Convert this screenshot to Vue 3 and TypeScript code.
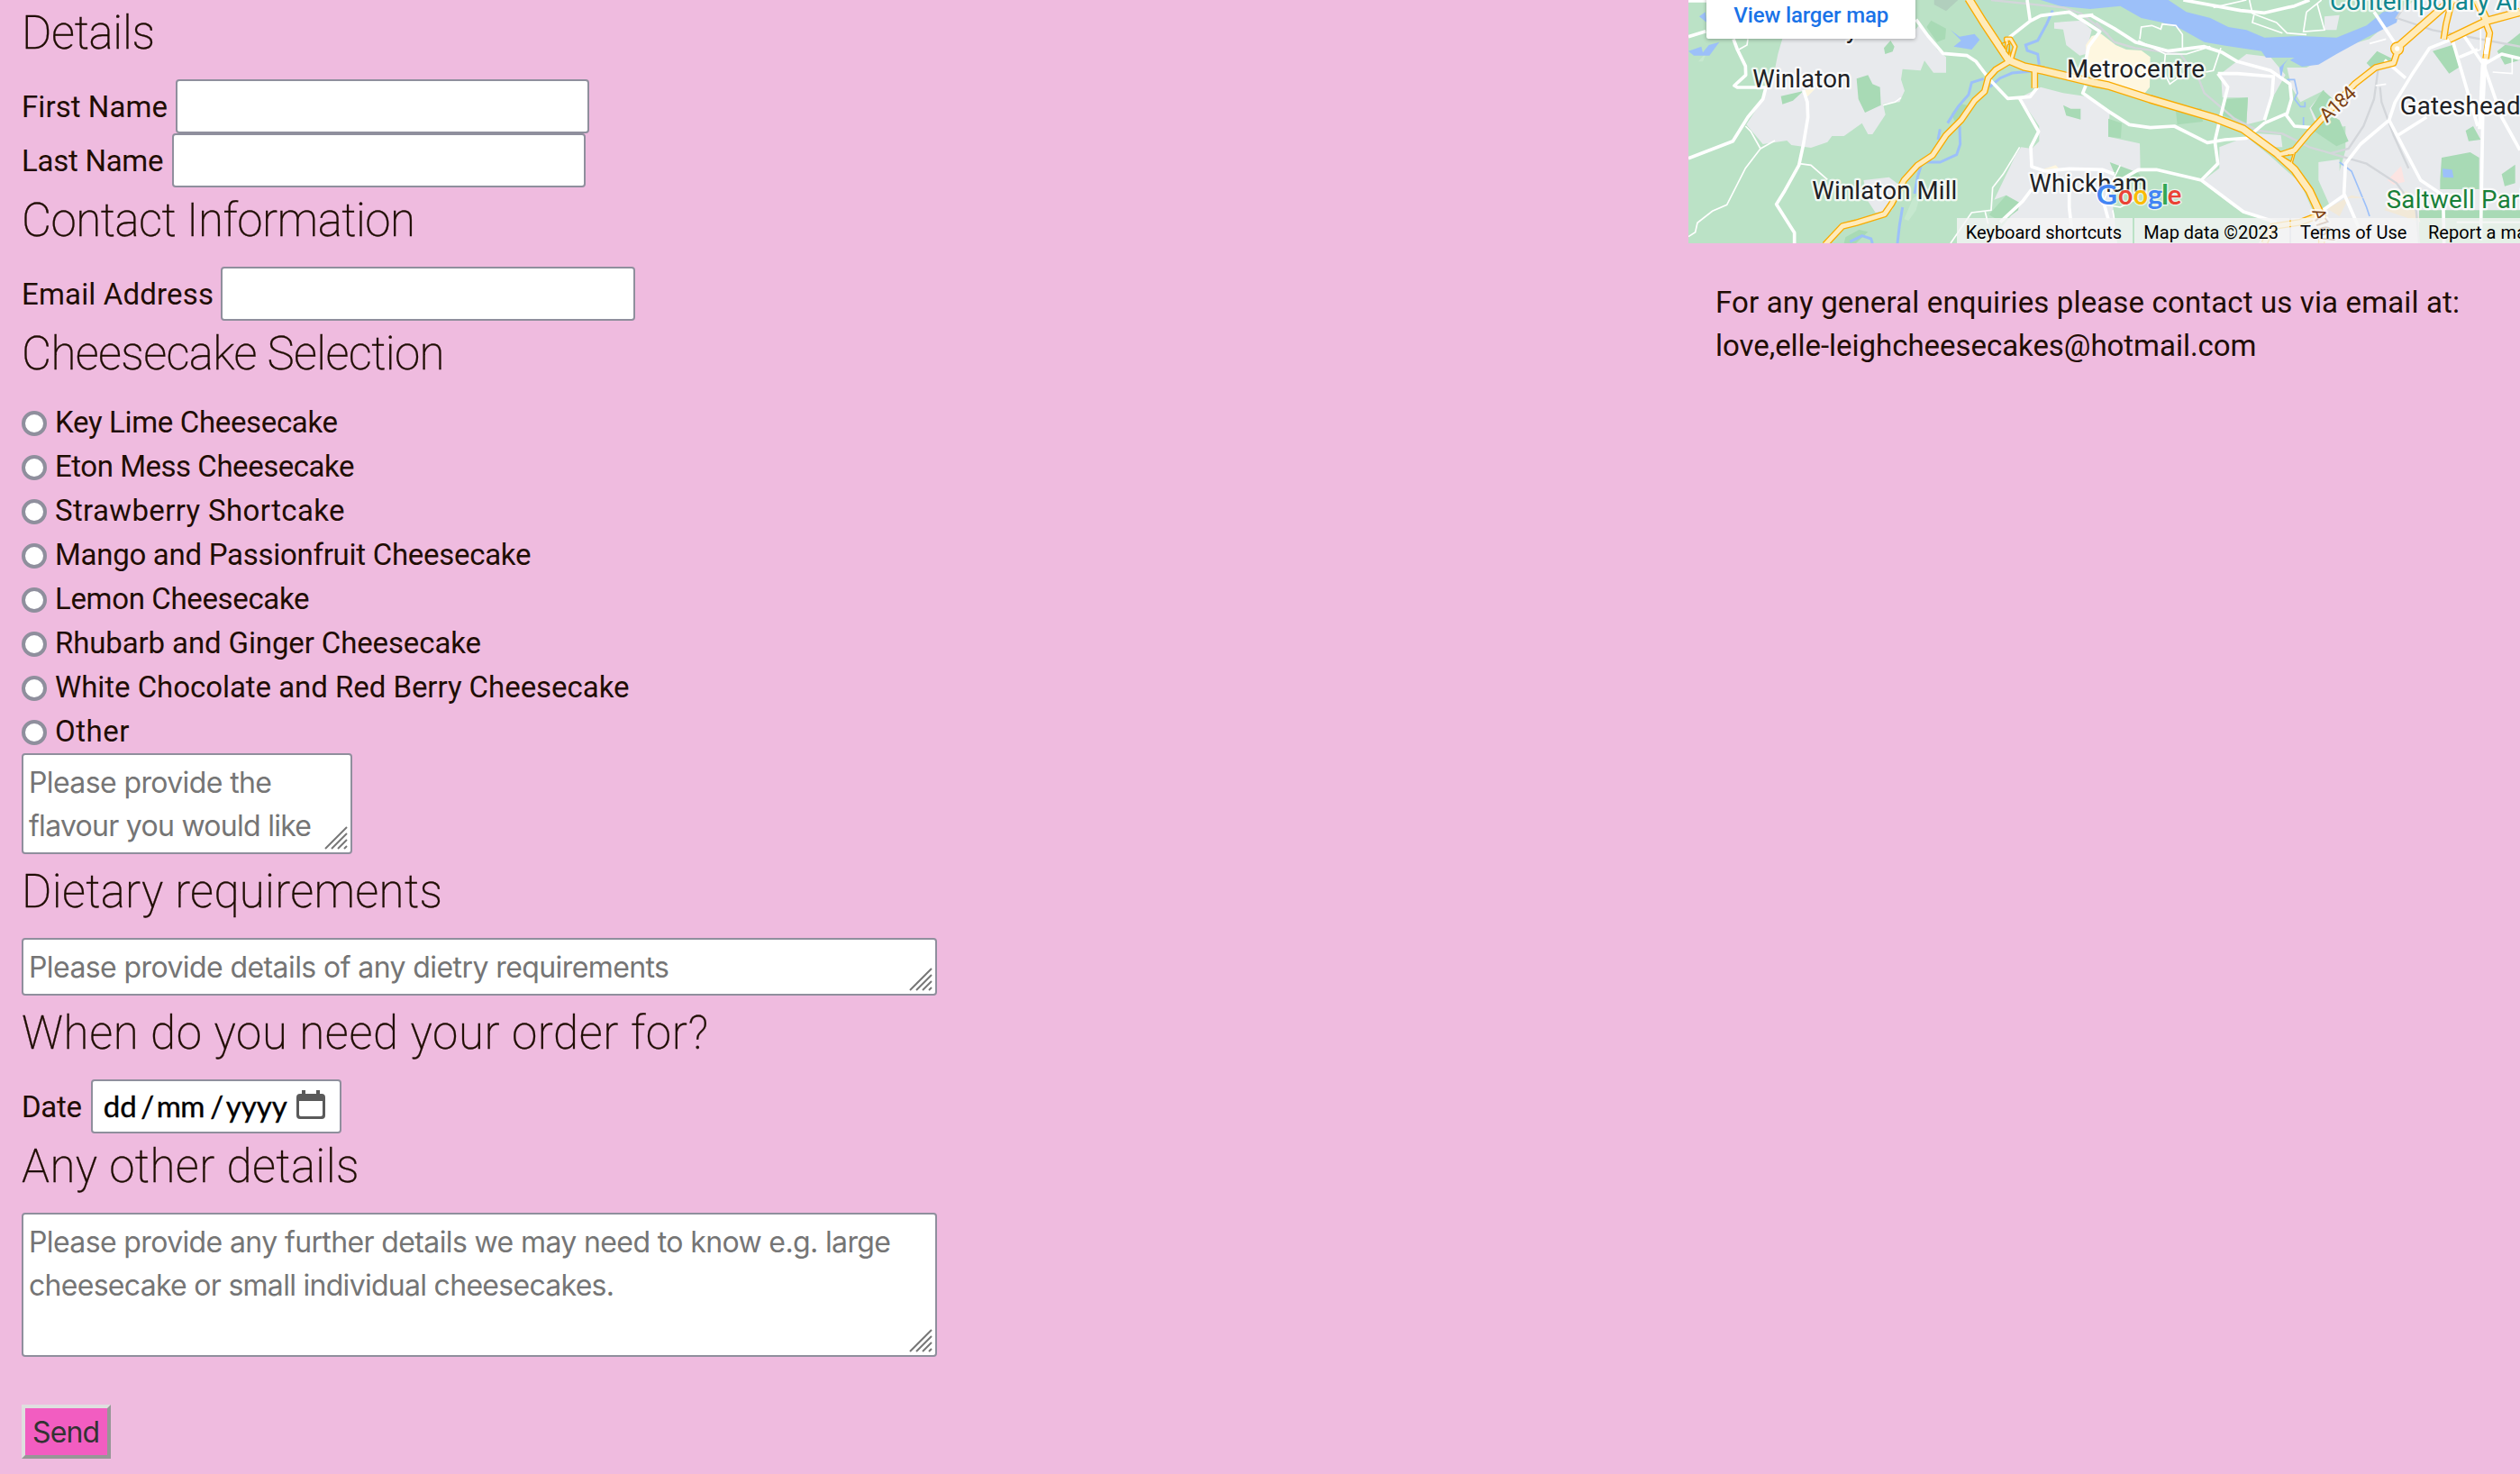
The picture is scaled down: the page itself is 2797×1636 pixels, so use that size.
<script setup lang="ts">
import type { Directive } from 'vue'

// Spreads the letters of a line so that it fills the given width.
const vFit: Directive<HTMLElement, number> = {
  mounted(el, { value }) {
    const count = (el.textContent ?? '').length
    const natural = el.getBoundingClientRect().width
    if (count > 1) el.style.letterSpacing = `${(value - natural) / (count - 1)}px`
  },
}

interface Flavour {
  label: string
  width: number
}

const flavours: Flavour[] = [
  { label: 'Key Lime Cheesecake', width: 314 },
  { label: 'Eton Mess Cheesecake', width: 332.5 },
  { label: 'Strawberry Shortcake', width: 321.5 },
  { label: 'Mango and Passionfruit Cheesecake', width: 528.5 },
  { label: 'Lemon Cheesecake', width: 282.5 },
  { label: 'Rhubarb and Ginger Cheesecake', width: 473 },
  { label: 'White Chocolate and Red Berry Cheesecake', width: 637.5 },
  { label: 'Other', width: 82.5 },
]
</script>

<template>
  <div class="page">
    <form class="order" @submit.prevent>
      <h3><span v-fit="148">Details</span></h3>
      <div class="row"><label><span v-fit="162">First Name</span></label><i class="field first"></i></div>
      <div class="row"><label><span v-fit="157.5">Last Name</span></label><i class="field last"></i></div>
      <h3><span v-fit="437">Contact Information</span></h3>
      <div class="row"><label><span v-fit="213">Email Address</span></label><i class="field email"></i></div>
      <h3><span v-fit="469.5">Cheesecake Selection</span></h3>

      <div v-for="f in flavours" :key="f.label" class="choice">
        <i class="radio"></i><span v-fit="f.width">{{ f.label }}</span>
      </div>

      <div class="area flavour">
        <p><span v-fit="270">Please provide the</span></p>
        <p><span v-fit="314">flavour you would like</span></p>
        <svg class="grip" viewBox="0 0 26 26"><path d="M1 25 25 1M8 25 25 8M15 25l10-10M22 25l3-3" /></svg>
      </div>

      <h3><span v-fit="467">Dietary requirements</span></h3>
      <div class="area diet">
        <p><span v-fit="711">Please provide details of any dietry requirements</span></p>
        <svg class="grip" viewBox="0 0 26 26"><path d="M1 25 25 1M8 25 25 8M15 25l10-10M22 25l3-3" /></svg>
      </div>

      <h3><span v-fit="762">When do you need your order for?</span></h3>
      <div class="row">
        <label><span v-fit="67">Date</span></label>
        <div class="date">
          <span class="day">dd</span><span class="slash">/</span>
          <span class="month">mm</span><span class="slash">/</span>
          <span class="year">yyyy</span>
          <svg class="calendar" viewBox="0 0 32 32">
            <path fill="#5a5a5a" fill-rule="evenodd" d="M6 0h4v4h12V0h4v4h2a4 4 0 0 1 4 4v20a4 4 0 0 1-4 4H4a4 4 0 0 1-4-4V8a4 4 0 0 1 4-4h2zM3 12v15a2 2 0 0 0 2 2h22a2 2 0 0 0 2-2V12z" />
          </svg>
        </div>
      </div>

      <h3><span v-fit="374.5">Any other details</span></h3>
      <div class="area notes">
        <p><span v-fit="957">Please provide any further details we may need to know e.g. large</span></p>
        <p><span v-fit="650">cheesecake or small individual cheesecakes.</span></p>
        <svg class="grip" viewBox="0 0 26 26"><path d="M1 25 25 1M8 25 25 8M15 25l10-10M22 25l3-3" /></svg>
      </div>
      <button class="send" type="submit"><span v-fit="75">Send</span></button>
    </form>

    <aside class="side">
      <svg class="map" viewBox="42 0 2769 810">
        <rect x="42" width="2769" height="810" fill="#bbe2c6" />
        <!-- built-up areas -->
        <g fill="#e8eaed">
          <path d="M355 128H770L810 85 840 120 870 165 900 190V242H858L828 202 815 235 755 230 750 265 762 302 745 340 690 345 698 382 655 447H640L620 410 560 453H520L505 473 450 492 385 483 370 468 290 480 235 415 290 330 330 230 340 180z" />
          <path d="M1145 325 1215 290 1290 310 1360 320 1445 370 1440 455 1545 478 1547 570 1480 600 1450 640 1470 810H1040L1110 726 1145 680 1100 650 1060 665 1130 520 1150 490 1185 495 1210 470V420z" />
          <path d="M1260 75 1350 68 1385 100 1365 180 1345 185 1300 150 1290 98 1260 95zM625 600 710 590 750 620 720 700 665 708 640 670z" />
          <g transform="translate(1380)">
            <path d="M430 490 520 455 600 520 700 610 740 700 800 690 760 600 760 540 830 530 830 570 850 500 850 420 790 430 745 400 730 360 780 300 700 340 670 290 655 225 720 225 860 150 930 130 1000 70 1080 0H1431V810H560L600 740 480 690 370 605 430 560z" />
            <path d="M435 245 520 180 600 190 650 250 610 320 580 400 520 415 525 325 440 325zM780 55 830 50 820 100 780 100zM500 440 635 450 640 490 580 490z" />
          </g>
        </g>
        <!-- parks -->
        <g fill="#a8dab5">
          <path d="M602 262 640 250 655 280 680 290 683 350 630 375 608 330zM350 320 425 303 390 335 355 347zM693 160 715 135 728 155 722 172 697 180zM835 90 850 68 900 95 897 130 870 140zM1290 350 1315 362 1348 362V398L1300 385zM1043 715 1100 650 1145 675 1140 700 1085 740zM917 380 945 345 970 350 960 390 930 405zM565 790 610 765 640 772 600 810H560z" />
          <g transform="translate(1380)">
            <path d="M60 395 105 410 102 460 60 455zM285 370 370 360 375 405 290 415zM455 330 525 325 520 410 430 380zM735 360 775 300 825 345 795 380 830 400 860 470 820 487 735 430 760 410zM920 210 955 170 1005 195 985 225 940 230zM1165 600 1170 525 1265 507 1295 525V630H1165zM1250 435 1275 420 1300 465 1260 470zM1370 580 1415 548V610L1380 620zM1140 170 1205 150 1235 220 1195 245zM1355 170 1431 110V200L1380 215zM1095 700H1431V810H1095zM65 540 160 575 190 620 90 600z" />
          </g>
        </g>
        <path fill="#c6e8cf" d="M760 730 790 660 815 645 800 700 775 735zM75 205 105 170 90 205z" />
        <path fill="#b1cfbd" d="M860 0H940L900 37 860 15z" />
        <!-- water -->
        <g fill="#9cc0f9">
          <path d="M1215 0H1640L1700 40 1780 60 1840 90 1900 100 1960 125 2080 120 2200 125 2300 85 2355 40 2410 35 2400 75 2300 125 2200 180 2140 215 2085 222 2045 200 2060 192 1965 192 1950 170 1830 152 1760 140 1680 95 1620 75 1550 60 1480 20 1380 30 1280 20z" />
          <path d="M915 100 945 122 995 113 1012 133 985 165 925 155 950 135zM78 55 98 40 103 75zM42 170 85 155 90 175 110 150 145 140 112 185 60 185zM2553 562 2585 565 2590 592 2555 590zM2010 225 2040 195 2025 215 2015 265z" />
        </g>
        <g fill="none" stroke="#9cc0f9" stroke-width="9">
          <path d="M1255 35 1235 80 1205 135 1165 150 1170 168 1205 180 1210 215M1180 238 1120 243 1080 260 1045 290M1025 262 985 275 975 315 940 355 905 410M945 420 947 480 935 515 880 540 820 540 805 590 795 645M755 690 745 750 738 810M580 805 620 785 650 795 655 810M880 430 873 465" />
          <path stroke-width="5" d="M2035 265H2060L2070 310 2060 330 2080 355H2095V340M2090 390V420M2210 540 2250 570 2300 690 2310 720" />
        </g>
        <!-- commercial and medical areas -->
        <path fill="#fef7e0" d="M1365 150 1385 120 1415 112 1465 150 1500 165 1550 168 1580 190 1578 290 1560 312 1410 265 1370 240zM425 300 465 295 435 325zM1220 565 1265 550 1275 560z" />
        <path fill="#f2e9d8" d="M2160 690 2210 720 2240 660 2295 660 2250 650 2160 700zM2390 630 2440 640 2480 740 2360 700z" />
        <path fill="#fce4e2" d="M2370 600 2415 553 2427 605 2390 615z" />
        <!-- railways -->
        <g fill="none" stroke="#d3d6da" stroke-width="7">
          <path d="M1050 0 1290 25 1350 45 1440 115M1400 75 1460 140 1530 160 1680 180 1740 260 1760 310 1860 395 1940 435 2020 445 2110 490 2180 510M2340 220 2325 330 2290 420 2240 495 2180 510 2300 545 2400 610 2465 700 2475 810M2345 290 2350 340 2390 450 2440 560M2440 0 2400 60 2520 100 2811 155" />
        </g>
        <!-- minor roads -->
        <g fill="none" stroke="#fff" stroke-width="5">
          <path d="M232 420 250 438 282 495 232 560 170 682 122 703 72 742 65 773 42 788M282 495 330 468M412 545 450 550 505 598M690 350 730 340 750 325M240 130 237 150 210 165M1145 490 1090 580 1055 625 1050 700 985 708 915 810M1030 705 1040 745" />
          <path transform="translate(1380)" d="M165 130 170 90 205 85 235 97 240 80 285 85 307 115V165M160 135 250 180H320L400 155M250 180 245 240 265 280 320 240M530 0 540 45 620 75 655 110 720 115M410 25 520 0M545 50 540 75 640 110M720 40 770 0M755 10 780 100 710 105 720 40M435 160 410 235 385 240M930 145 985 130M950 285 985 280M1225 190 1300 165M1300 0V165M1340 240 1405 245V190M100 550 75 600 40 680 100 690 160 660M80 730 75 700M1220 740H1431" />
        </g>
        <!-- local roads -->
        <g fill="none" stroke="#fff" stroke-width="11" stroke-linejoin="round">
          <path d="M42 3H105M42 122 100 104M192 130 205 165 232 220 233 250 195 285 205 291H300L290 330 240 390 190 470 42 527M425 300 438 340 440 390 425 480 410 550 360 640 335 680 395 775V810M800 65 840 120 890 178 970 185 1000 205 1045 265 1105 328 1180 322 1205 290M1145 328 1208 438 1182 490 1185 555 1230 570 1310 562 1420 565 1460 580M1310 640V690L1318 760M1185 630 1155 670 1080 740M1415 640 1440 730M1110 125 1180 70 1170 0M1180 70 1215 52 1310 40 1350 65 1412 105 1375 155 1365 200M1340 55 1390 50" />
          <path d="M1365 285 1355 310 1440 370 1510 415 1580 425 1660 420 1770 475 1830 465 1900 460 1960 410 2030 380 2060 420 2120 425M1380 50 1460 95 1530 140 1640 170 1760 155 1820 175 1870 205 1980 235 2045 280 2050 330 2035 380M1805 245H1870L1990 255 1985 320 1960 400M1805 245 1838 290 1810 405 1795 470 1805 545 1750 600 1600 565 1540 565 1480 600M1750 600 1830 660 1890 705 2000 740M1690 0 1880 35 1960 43 2060 20 2110 0M2325 40 2405 160M2360 200 2430 260M2585 130 2510 160 2450 250 2395 340 2375 400 2280 480 2230 545 2225 645 2275 760M2155 700 2225 650M2375 400 2480 600 2555 650 2558 810M2405 450 2500 390M2585 130 2670 420M2625 120 2690 215 2750 180 2811 195M2690 215 2680 800M2690 215 2750 390 2811 500M2610 190 2670 165" />
        </g>
        <path d="M2705 130 2690 220 2680 430" fill="none" stroke="#fff" stroke-width="19" />
        <!-- trunk roads -->
        <g fill="none" stroke="#f9ab00" stroke-linejoin="round">
          <path stroke-width="23" d="M497 815 555 753 600 742 695 713 718 680 760 600 805 550 855 517 900 450 950 400 995 335 1028 305 1040 260 1065 232 1110 205M1195 235V293M2000 520 2060 500 2110 440 2260 280 2330 225 2390 210 2405 165M2044 540 2055 500M2557 130 2565 80 2585 0M2697 75 2710 110 2697 195M1980 755 2080 740 2145 715M1985 755 1960 810M2155 710 2150 810" />
          <path stroke-width="29" d="M975-5 1025 75 1108 200 1160 222 1225 235 1390 275 1440 285 1580 330 1800 395 1890 430 2000 510 2060 565 2110 635 2145 710M2400 160 2560 20 2600-10M2575 130 2700 70 2811 40M2665-5 2700 70" />
          <path stroke-width="17" d="M1110 205 1100 130 1115 130 1130 155 1118 195" />
          <circle cx="2402" cy="162" r="14" stroke-width="18" />
        </g>
        <g fill="none" stroke="#ffebba" stroke-linejoin="round">
          <path stroke-width="15" d="M497 815 555 753 600 742 695 713 718 680 760 600 805 550 855 517 900 450 950 400 995 335 1028 305 1040 260 1065 232 1110 205M1195 235V293M2000 520 2060 500 2110 440 2260 280 2330 225 2390 210 2405 165M2044 540 2055 500M2557 130 2565 80 2585 0M2697 75 2710 110 2697 195M1980 755 2080 740 2145 715M1985 755 1960 810M2155 710 2150 810" />
          <path stroke-width="21" d="M975-5 1025 75 1108 200 1160 222 1225 235 1390 275 1440 285 1580 330 1800 395 1890 430 2000 510 2060 565 2110 635 2145 710M2400 160 2560 20 2600-10M2575 130 2700 70 2811 40M2665-5 2700 70" />
          <path stroke-width="9" d="M1110 205 1100 130 1115 130 1130 155 1118 195" />
          <circle cx="2402" cy="162" r="13" stroke-width="12" />
        </g>
        <path d="M1085 145 1098 140 1096 160zM1104 150 1112 145 1108 180 1100 170zM2020 520 2055 515 2048 538z" fill="#bbe2c6" stroke="#f9ab00" stroke-width="4" />
        <circle cx="2402" cy="162" r="8" fill="#fff" />
        <path d="M2705 125 2697 180" stroke="#fff" stroke-width="14" />
        <!-- place names -->
        <g class="place" font-size="83">
          <text x="567" y="127" textLength="40">y</text>
          <text x="256" y="290" textLength="327">Winlaton</text>
          <text x="454" y="662" textLength="483">Winlaton Mill</text>
          <text x="1302" y="258" textLength="459">Metrocentre</text>
          <text x="1177" y="640" textLength="392">Whickham</text>
          <text x="2411" y="380" textLength="402">Gateshead</text>
          <text x="2366" y="692" textLength="486" fill="#188038">Saltwell Park</text>
          <text x="2178" y="33" textLength="665" fill="#0d868f">Contemporary Art</text>
          <text transform="translate(2168 411) rotate(-43)" font-size="66" textLength="140" fill="#7b3f12">A184</text>
          <text transform="translate(2118 702) rotate(72)" font-size="60" textLength="120" fill="#7b3f12">A167</text>
        </g>
        <g class="google" font-size="93">
          <text x="1400" y="680" fill="#4285f4" textLength="70" lengthAdjust="spacingAndGlyphs">G</text>
          <text x="1473" y="680" fill="#ea4335" textLength="49" lengthAdjust="spacingAndGlyphs">o</text>
          <text x="1523" y="680" fill="#fbbc04" textLength="49" lengthAdjust="spacingAndGlyphs">o</text>
          <text x="1571" y="680" fill="#4285f4" textLength="50" lengthAdjust="spacingAndGlyphs">g</text>
          <text x="1617" y="680" fill="#34a853" textLength="24" lengthAdjust="spacingAndGlyphs">l</text>
          <text x="1637" y="680" fill="#ea4335" textLength="47" lengthAdjust="spacingAndGlyphs">e</text>
        </g>
        <path d="M936 726H1521V810H936zM1527 726H2044V810H1527zM2048 726H2811V810H2048z" fill="#f5f5f5" fill-opacity=".8" />
        <g class="legal" font-size="60">
          <text x="965" y="795" textLength="520">Keyboard shortcuts</text>
          <text x="1558" y="795" textLength="449">Map data ©2023</text>
          <text x="2079" y="795" textLength="355">Terms of Use</text>
          <text x="2505" y="795" textLength="503">Report a map error</text>
        </g>
        <rect class="card" x="102" y="-20" width="696" height="149" rx="7" fill="#fff" />
        <text x="193" y="74" font-size="72" textLength="516" class="larger">View larger map</text>
      </svg>
      <p class="enquiry">
        <span v-fit="826">For any general enquiries please contact us via email at:</span><br />
        <span v-fit="600.5">love,elle-leighcheesecakes@hotmail.com</span>
      </p>
    </aside>
  </div>
</template>

<style>
body {
  background: #efbbdf;
  overflow: hidden;
}
</style>

<style scoped>
.page {
  display: flex;
  justify-content: space-between;
  box-sizing: border-box;
  width: 2797px;
  height: 1636px;
  overflow: hidden;
  background: #efbbdf;
  color: #1f0d03;
  font: 33px/48px Roboto, sans-serif;
}
span {
  display: inline-block;
  white-space: pre;
}
.order {
  width: 1100px;
  padding-left: 24px;
}
h3 {
  height: 88px;
  box-sizing: border-box;
  margin: 0;
  font-size: 51px;
  font-weight: 200;
  line-height: 73px;
  -webkit-text-stroke: 0.3px #1f0d03;
}
.row {
  display: flex;
  height: 60px;
}
.row label {
  line-height: 62px;
}
.field {
  width: 459px;
  box-sizing: border-box;
  border: 2px solid #8f8f9d;
  border-radius: 4px;
  background: #fff;
}
.first { margin-left: 9px; }
.last { margin-left: 9.5px; }
.email {
  width: 460px;
  margin-left: 8px;
}
.choice {
  display: flex;
  height: 49px;
  line-height: 49px;
}
.radio {
  box-sizing: border-box;
  width: 28px;
  height: 28px;
  margin: 12px 9px 0 0;
  border: 4px solid #8f8f9d;
  border-radius: 50%;
  background: #fff;
}
.area {
  position: relative;
  box-sizing: border-box;
  width: 1016px;
  padding: 7px 6px 0;
  border: 2px solid #8f8f9d;
  border-radius: 4px;
  background: #fff;
  color: #757575;
  font: 32px/48px Inter, sans-serif;
}
.area p {
  margin: 0;
}
.area.flavour {
  width: 367px;
  height: 112px;
  margin-bottom: 5px;
}
.diet {
  height: 64px;
  margin-bottom: 5px;
}
.notes {
  height: 160px;
}
.grip {
  position: absolute;
  right: 3px;
  bottom: 3px;
  width: 26px;
  height: 26px;
  fill: none;
  stroke: #777;
  stroke-width: 2;
}
.date {
  display: flex;
  box-sizing: border-box;
  width: 278px;
  margin-left: 10px;
  padding-left: 12px;
  border: 2px solid #8f8f9d;
  border-radius: 4px;
  background: #fff;
  color: #000;
  font: 33px/55px Lato, sans-serif;
  -webkit-text-stroke: 0.4px #000;
}
.date span {
  flex: none;
}
.day { width: 39px; }
.month {
  width: 57px;
  letter-spacing: -0.5px;
}
.year { width: 66px; }
.slash {
  width: 20px;
  text-align: center;
}
.calendar {
  flex: none;
  width: 32px;
  height: 32px;
  margin: 10px 0 0 12px;
}
.send {
  display: block;
  box-sizing: border-box;
  width: 99px;
  height: 60px;
  margin-top: 53px;
  padding: 0 0 0 8px;
  border: 4px solid;
  border-color: #dfdfdf #979797 #979797 #dfdfdf;
  background: #f25dc1;
  color: #333;
  text-align: left;
  font: 32px/54px Inter, sans-serif;
}
.side {
  width: 923px;
}
.map {
  display: block;
  width: 923px;
  height: 270px;
  font-family: Roboto, sans-serif;
}
.place text {
  paint-order: stroke;
  stroke: #fff;
  stroke-opacity: 0.8;
  stroke-width: 14px;
  stroke-linejoin: round;
}
.place {
  fill: #202124;
}
.google {
  font-family: Lato, sans-serif;
  font-weight: 700;
}
.google text {
  paint-order: stroke;
  stroke: #fff;
  stroke-opacity: 0.7;
  stroke-width: 8px;
}
.card {
  filter: drop-shadow(0 3px 6px rgba(0, 0, 0, 0.3));
}
.larger {
  fill: #1a73e8;
  font-weight: 500;
}
.enquiry {
  margin: 42px 0 0 30px;
}
</style>
